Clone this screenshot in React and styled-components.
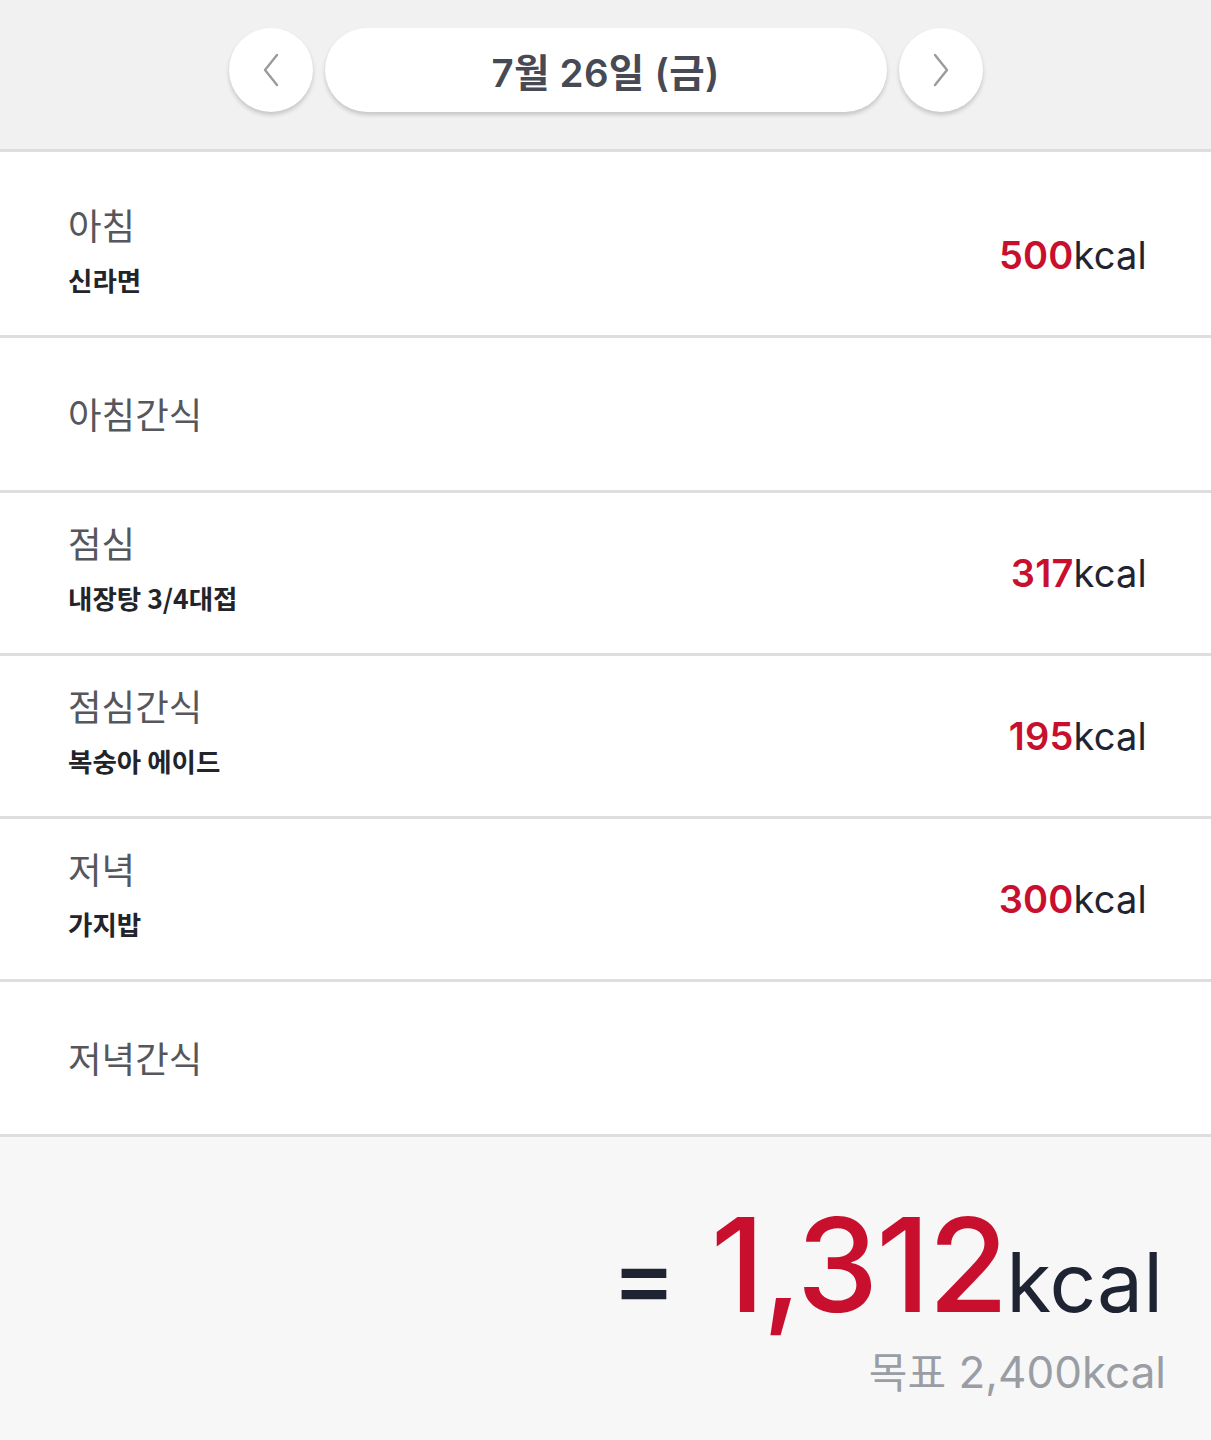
import React from 'react'
import styled, { createGlobalStyle } from 'styled-components'

const GlobalStyle = createGlobalStyle`
  body {
    margin: 0;
    background: #ffffff;
    font-family: Inter, "Noto Sans CJK KR", sans-serif;
  }
`

const meals = [
  { title: '아침', food: '신라면', kcal: 500, first: true },
  { title: '아침간식' },
  { title: '점심', food: '내장탕 3/4대접', kcal: 317 },
  { title: '점심간식', food: '복숭아 에이드', kcal: 195 },
  { title: '저녁', food: '가지밥', kcal: 300 },
  { title: '저녁간식' },
]

const Page = styled.div`
  width: 1211px;
  min-height: 1440px;
  display: flex;
  flex-direction: column;
  background: #f7f7f8;
`

const Header = styled.header`
  height: 152px;
  box-sizing: border-box;
  padding-top: 28px;
  display: flex;
  justify-content: center;
  gap: 12px;
  background: #f1f1f1;
  border-bottom: 3px solid #dedede;
`

const RoundButton = styled.button`
  width: 84px;
  height: 84px;
  border: none;
  border-radius: 50%;
  background: #ffffff;
  box-shadow: 0 3px 4px rgba(0, 0, 0, 0.18);
  display: flex;
  align-items: center;
  justify-content: center;
  padding: 0;
`

const DatePill = styled.div`
  width: 562px;
  height: 84px;
  border-radius: 42px;
  background: #ffffff;
  box-shadow: 0 3px 4px rgba(0, 0, 0, 0.18);
  display: flex;
  align-items: center;
  justify-content: center;
  font-size: 38.5px;
  font-weight: 600;
  color: #474a54;
  letter-spacing: 0.3px;
`

const List = styled.div`
  background: #ffffff;
`

const Row = styled.div`
  box-sizing: content-box;
  height: ${p => (p.$empty ? 152 : 160)}px;
  padding: ${p => (p.$first ? 23 : 0)}px 64px 0 68px;
  display: flex;
  align-items: center;
  justify-content: space-between;
  border-bottom: 3px solid #dedede;
`

const MealInfo = styled.div`
  display: flex;
  flex-direction: column;
  margin-bottom: ${p => (p.$empty ? 0 : 10)}px;
`

const MealTitle = styled.div`
  font-family: "Noto Sans CJK KR", sans-serif;
  font-size: 36.5px;
  line-height: 44px;
  color: #55575d;
`

const Food = styled.div`
  margin-top: 16px;
  font-family: "Noto Sans CJK KR", sans-serif;
  font-size: 26.5px;
  line-height: 34px;
  font-weight: 600;
  color: #22242a;
`

const Kcal = styled.div`
  font-size: 38px;
  color: #1f2433;
  letter-spacing: 0.2px;

  b {
    font-weight: 600;
    color: #c8102e;
  }
`

const Summary = styled.section`
  flex: 1;
  padding: 50px 48px 0 0;
  display: flex;
  flex-direction: column;
  align-items: flex-end;
`

const Total = styled.div`
  display: flex;
  align-items: baseline;
  color: #1f2433;
  line-height: 1.2;
`

const Equals = styled.span`
  font-size: 98px;
  font-weight: 500;
  margin-right: 34px;
`

const BigNumber = styled.span`
  font-size: 130px;
  font-weight: 500;
  color: #c8102e;
  letter-spacing: -2px;
  margin-right: 0;
`

const BigUnit = styled.span`
  font-size: 82px;
`

const Goal = styled.div`
  margin-top: -4px;
  margin-right: -3px;
  font-size: 44px;
  color: #9a9ea4;
  font-weight: 400;
`

const GoalLabel = styled.span`
  font-family: "Noto Sans CJK KR", sans-serif;
  font-size: 42px;
`

const Chevron = ({ dir }) => (
  <svg width="22" height="34" viewBox="0 0 22 34" fill="none">
    <path
      d={dir === 'left' ? 'M17 2 L5 17 L17 32' : 'M5 2 L17 17 L5 32'}
      stroke="#9b9b9b"
      strokeWidth="2.4"
      strokeLinecap="round"
      strokeLinejoin="round"
    />
  </svg>
)

export default function App() {
  return (
    <Page>
      <GlobalStyle />
      <Header>
        <RoundButton aria-label="이전 날">
          <Chevron dir="left" />
        </RoundButton>
        <DatePill>7월 26일 (금)</DatePill>
        <RoundButton aria-label="다음 날">
          <Chevron dir="right" />
        </RoundButton>
      </Header>
      <List>
        {meals.map(m => (
          <Row key={m.title} $first={m.first} $empty={!m.food}>
            <MealInfo $empty={!m.food}>
              <MealTitle>{m.title}</MealTitle>
              {m.food && <Food>{m.food}</Food>}
            </MealInfo>
            {m.kcal && (
              <Kcal>
                <b>{m.kcal}</b>kcal
              </Kcal>
            )}
          </Row>
        ))}
      </List>
      <Summary>
        <Total>
          <Equals>=</Equals>
          <BigNumber>1,312</BigNumber>
          <BigUnit>kcal</BigUnit>
        </Total>
        <Goal>
          <GoalLabel>목표</GoalLabel> 2,400kcal
        </Goal>
      </Summary>
    </Page>
  )
}
